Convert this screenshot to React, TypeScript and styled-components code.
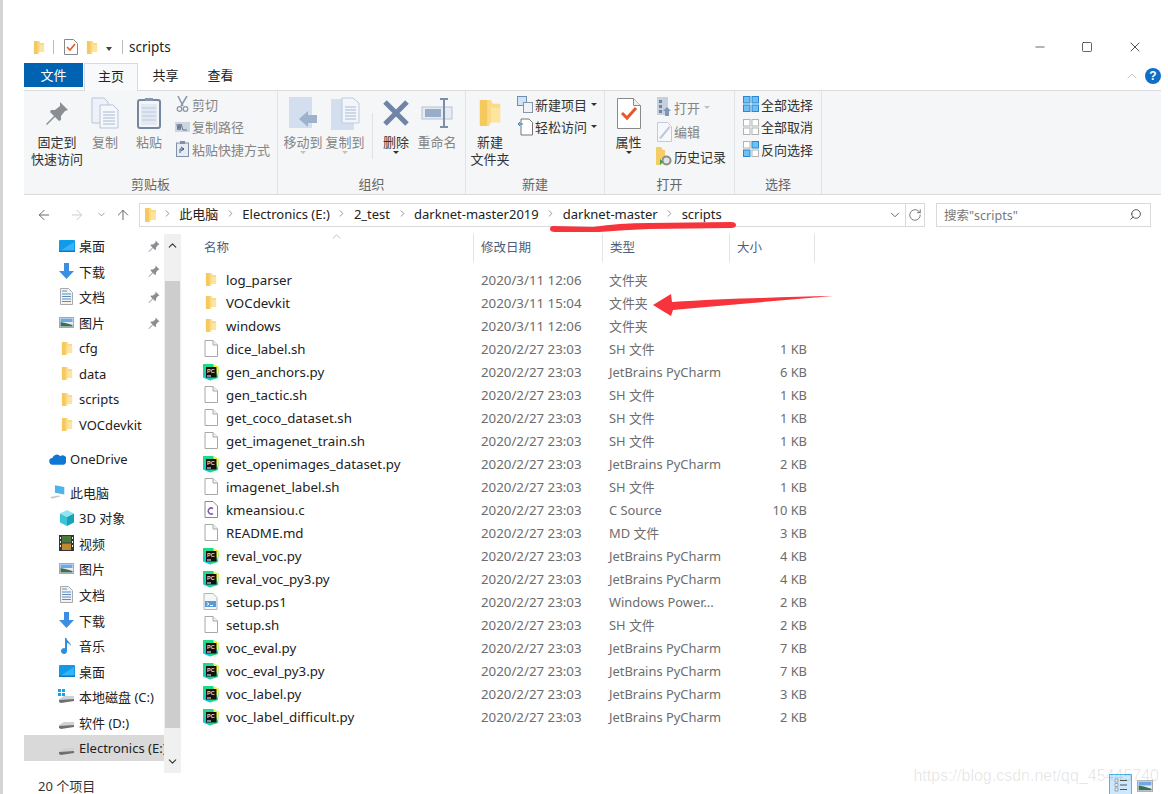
import React from "react";
import styled, { createGlobalStyle } from "styled-components";
import { ChevronDown, ChevronUp, ChevronRight, ArrowLeft, ArrowRight, ArrowUp, RotateCw, Search, Minus, Square, X } from "lucide-react";

const GlobalStyle = createGlobalStyle`
  html, body { margin: 0; padding: 0; background: #fff; }
  body {
    font-family: "Noto Sans", "Noto Sans CJK SC", sans-serif;
    font-size: 14px;
    color: #222;
    overflow: hidden;
  }
`;

// ---- icons ----
const FolderIcon = ({ size = 16 }: { size?: number }) => (
  <svg width={size * 0.8} height={size} viewBox="0 0 13 16">
    <path d="M1 1h6l1 2h4v10H7l-1 2-5 0z" fill="#fbd986" />
    <path d="M1 1h4v14H1z" fill="#f6c95f" />
    <path d="M7 5h5v8H7z" fill="#fde49f" />
  </svg>
);

const FileIcon = () => (
  <svg width="14" height="17" viewBox="0 0 14 17">
    <path d="M1 .5h8l4.5 4.5v11.5H1z" fill="#fff" stroke="#a8a8a8" />
    <path d="M9 .5v4.5h4.5" fill="#f0f0f0" stroke="#a8a8a8" />
  </svg>
);

const PyCharmIcon = () => (
  <svg width="18" height="18" viewBox="0 0 18 18">
    <path d="M1 1h10l6 3-1 11-8 2.5-7-3z" fill="#21d789" />
    <path d="M11 1l6 3-1 9-3-6z" fill="#fcf84a" />
    <path d="M1 9l2 6 6 2.5z" fill="#07c3f2" />
    <rect x="4" y="4" width="10.5" height="10.5" fill="#111" />
    <rect x="5" y="12.5" width="4" height="1" fill="#fff" />
    <text x="5" y="9.5" fontSize="5.5" fontWeight="700" fill="#ddd" fontFamily="Liberation Sans, sans-serif">PC</text>
  </svg>
);

const CSourceIcon = () => (
  <svg width="14" height="17" viewBox="0 0 14 17">
    <path d="M1 .5h8l4.5 4.5v11.5H1z" fill="#fff" stroke="#8a8a8a" />
    <path d="M9 7.5a3 3 0 1 0 0 5" fill="none" stroke="#7b5aa6" strokeWidth="1.5" />
  </svg>
);

const ScriptIcon = () => (
  <svg width="15" height="17" viewBox="0 0 15 17">
    <path d="M1 .5h9l4 4v12H1z" fill="#f4f6f8" stroke="#b4b4b4" />
    <rect x="2" y="8" width="11" height="6" fill="#5b9bd5" />
    <path d="M4 9.5l2 1.5-2 1.5M7 12.5h3" stroke="#fff" fill="none" />
  </svg>
);

const PinIcon = ({ big }: { big?: boolean }) => (
  <svg width={big ? 24 : 12} height={big ? 24 : 12} viewBox="0 0 24 24">
    <path d="M15 1l8 8-3 1-4 5 0 4-2 1-4-4-8 8-1-1 8-8-4-4 1-2 4 0 5-4z" fill="#8a8d92" />
  </svg>
);

const DesktopIcon = () => (
  <svg width="16" height="12" viewBox="0 0 16 12">
    <rect width="16" height="12" rx="1" fill="#0f9bea" />
    <path d="M1 11l14-9v9z" fill="#36b4f5" />
    <rect y="10.5" width="16" height="1.5" fill="#0b78c4" />
  </svg>
);

const DownloadIcon = () => (
  <svg width="15" height="16" viewBox="0 0 15 16">
    <path d="M5 0h5v8h5l-7.5 8L0 8h5z" fill="#3c8fe0" />
  </svg>
);

const DocsIcon = () => (
  <svg width="13" height="17" viewBox="0 0 13 17">
    <path d="M.5.5h8l4 4v12H.5z" fill="#f2f2f2" stroke="#a9a9a9" />
    <path d="M2 3h5M2 6h9M2 8.5h9M2 11h9M2 13.5h9" stroke="#5a8fc0" />
  </svg>
);

const PictureIcon = ({ w = 15, h = 11 }: { w?: number; h?: number }) => (
  <svg width={w} height={h} viewBox="0 0 15 11">
    <rect x=".5" y=".5" width="14" height="10" fill="#e8eef4" stroke="#a9a9a9" />
    <rect x="1.5" y="1.5" width="12" height="3.5" fill="#6ea8e6" />
    <path d="M1.5 9.5V5l5 1 7 2v1.5z" fill="#3e6f55" />
  </svg>
);

const CubeIcon = () => (
  <svg width="16" height="16" viewBox="0 0 16 16">
    <path d="M8 0l7 3.5-7 3.5-7-3.5z" fill="#8fe6ee" />
    <path d="M1 3.5l7 3.5v9l-7-3.5z" fill="#3cc4d6" />
    <path d="M15 3.5L8 7v9l7-3.5z" fill="#17a2b8" />
  </svg>
);

const VideoIcon = () => (
  <svg width="15" height="16" viewBox="0 0 15 16">
    <rect width="15" height="16" fill="#34343c" />
    <rect x="3" y="1" width="9" height="6.5" fill="#4b7a3a" />
    <rect x="3" y="8.5" width="9" height="6.5" fill="#c28a2e" />
    <path d="M1 2h1v2H1zM1 6h1v2H1zM1 10h1v2H1zM13 2h1v2h-1zM13 6h1v2h-1zM13 10h1v2h-1z" fill="#eee" />
  </svg>
);

const MusicIcon = () => (
  <svg width="11" height="16" viewBox="0 0 11 16">
    <path d="M4 0h1.5c0 3 4.5 4 4.5 8-1-2-2.5-3-4-3v8a3 3 0 1 1-2-2.8z" fill="#2b8fe0" />
  </svg>
);

const DriveIcon = ({ win }: { win?: boolean }) => (
  <svg width="17" height="15" viewBox="0 0 17 15">
    {win && <path d="M0 0h3v3H0zM4 0h3v3H4zM0 4h3v3H0zM4 4h3v3H4z" fill="#12a5ef" />}
    <path d="M1 10l5-3h10v3l-13 3-2-1z" fill="#d0d2d4" />
    <path d="M1 11l15-1v2l-13 2-2-1z" fill="#6d6f72" />
  </svg>
);

const CloudIcon = () => (
  <svg width="18" height="12" viewBox="0 0 18 12">
    <path d="M4 12a3.5 3.5 0 0 1-.5-7A5 5 0 0 1 12 3a4 4 0 0 1 6 5v1c0 2-1 3-3 3z" fill="#0f78d4" />
  </svg>
);

const PcIcon = () => (
  <svg width="20" height="16" viewBox="0 0 20 16">
    <path d="M7 0l11 2v9L7 9z" fill="#4fb3ea" />
    <path d="M1 14l10-2 3 1-10 3z" fill="#c8cace" />
  </svg>
);

const CopyBigIcon = () => (
  <svg width="28" height="32" viewBox="0 0 28 32">
    <path d="M1 1h12l4 4v21H1z" fill="#eef2f8" stroke="#b6c5db" />
    <path d="M9 8h13l5 5v18H9z" fill="#f5f7fb" stroke="#b6c5db" />
    <path d="M12 15h12M12 18h12M12 21h12M12 24h12M12 27h12" stroke="#a8bad4" />
  </svg>
);

const PasteBigIcon = () => (
  <svg width="24" height="32" viewBox="0 0 24 32">
    <rect x="1" y="3" width="22" height="28" rx="2" fill="#f3f5f8" stroke="#75869f" strokeWidth="2" />
    <rect x="4" y="7" width="16" height="21" fill="#e3e9f3" />
    <path d="M5 11h14M5 15h14M5 19h14M5 23h14" stroke="#bcc8da" />
    <path d="M8 4h8V1h-8z" fill="#8796ad" />
  </svg>
);

const ScissorsIcon = () => (
  <svg width="13" height="16" viewBox="0 0 13 16">
    <path d="M2 0l5 10M11 0L5 10" stroke="#8a97aa" strokeWidth="1.5" />
    <circle cx="3.5" cy="13" r="2.3" fill="none" stroke="#8a97aa" strokeWidth="1.3" />
    <circle cx="9.5" cy="13" r="2.3" fill="none" stroke="#8a97aa" strokeWidth="1.3" />
  </svg>
);

const CopyPathIcon = () => (
  <svg width="15" height="10" viewBox="0 0 15 10">
    <rect width="15" height="10" fill="#ccd5e3" />
    <path d="M2 2l1 6 1-6 1 6 1-6 2 6h4" fill="none" stroke="#66748a" />
  </svg>
);

const ShortcutIcon = () => (
  <svg width="13" height="16" viewBox="0 0 13 16">
    <rect x=".5" y="2" width="12" height="13.5" fill="#e7ecf4" stroke="#7f90a8" />
    <rect x="4" y="0" width="5" height="3" fill="#7f90a8" />
    <path d="M4 12V8h4M5 6l3 2-3 2" fill="none" stroke="#41587a" />
  </svg>
);

const MoveToIcon = () => (
  <svg width="28" height="32" viewBox="0 0 28 32">
    <rect width="23" height="31" fill="#d3deee" />
    <path d="M10 22l9-8v4h9v8h-9v4z" fill="#9eb2cd" />
  </svg>
);

const CopyToIcon = () => (
  <svg width="29" height="33" viewBox="0 0 29 33">
    <rect y="2" width="23" height="31" fill="#d3deee" />
    <path d="M11 1h11l6 5v20H11z" fill="#f2f5fa" stroke="#bccbdf" />
    <path d="M14 10h11M14 13h11M14 16h11M14 19h11M14 22h11" stroke="#a8bad4" />
  </svg>
);

const DeleteIcon = () => (
  <svg width="28" height="28" viewBox="0 0 28 28">
    <path d="M3 3l22 22M25 3L3 25" stroke="#6f84a8" strokeWidth="5" />
  </svg>
);

const RenameIcon = () => (
  <svg width="32" height="30" viewBox="0 0 32 30">
    <rect x="1" y="9" width="30" height="12" fill="#e6ebf3" stroke="#b4c2d6" />
    <rect x="4" y="11" width="16" height="8" fill="#99adca" />
    <path d="M19 1h8M19 29h8M23 1v28" stroke="#7d8fa8" strokeWidth="2" />
  </svg>
);

const NewItemIcon = () => (
  <svg width="16" height="17" viewBox="0 0 16 17">
    <rect x=".5" y=".5" width="9" height="9" fill="#cfe3f5" stroke="#6d8fb3" />
    <rect x="6.5" y="6.5" width="9" height="10" fill="#eef1f6" stroke="#8795a8" />
  </svg>
);

const EasyAccessIcon = () => (
  <svg width="15" height="18" viewBox="0 0 15 18">
    <path d="M3 1h8l3.5 3.5V17H3z" fill="#fff" stroke="#777" />
    <path d="M0 6h5M2 4L0 6l2 2" fill="none" stroke="#2d7fc4" />
  </svg>
);

const PropertiesIcon = () => (
  <svg width="24" height="31" viewBox="0 0 24 31">
    <path d="M.5.5h16l7 7v23H.5z" fill="#fff" stroke="#8a8a8a" />
    <path d="M16.5.5v7h7" fill="#eee" stroke="#8a8a8a" />
    <path d="M5 15l5 5 9-10" fill="none" stroke="#e8562a" strokeWidth="3" />
  </svg>
);

const OpenIcon = () => (
  <svg width="15" height="20" viewBox="0 0 15 20">
    <rect width="11" height="18" fill="#c7d1de" />
    <path d="M2 3h3v3H2zM2 8h3v3H2zM2 13h3v3H2z" fill="#6f84a0" />
    <path d="M10 10l4 4h-2v5H8v-5H6z" fill="#7e97b8" />
  </svg>
);

const EditIcon = () => (
  <svg width="15" height="20" viewBox="0 0 15 20">
    <path d="M.5.5h10l4 4v15H.5z" fill="#f6f8fb" stroke="#c0cada" />
    <path d="M2 16L12 4l1.5 1.5L4 17z" fill="#bccbdc" />
  </svg>
);

const HistoryIcon = () => (
  <svg width="16" height="19" viewBox="0 0 16 19">
    <path d="M0 0h5l2 3h2v9H5v6H0z" fill="#f6cc66" />
    <circle cx="10.5" cy="13.5" r="5" fill="#8c8c8c" />
    <circle cx="10.5" cy="13.5" r="3" fill="#e4e4e4" />
    <path d="M4 12l3 3-3 3z" fill="#37a63c" />
  </svg>
);

const SelectGridIcon = ({ on }: { on: boolean[] }) => (
  <svg width="16" height="16" viewBox="0 0 16 16">
    {[[0, 0], [8.5, 0], [0, 8.5], [8.5, 8.5]].map(([x, y], i) => (
      <rect
        key={i}
        x={x + 0.5}
        y={y + 0.5}
        width="6.5"
        height="6.5"
        fill={on[i] ? "#6cc0f5" : "#fff"}
        stroke={on[i] ? "#2b88cf" : "#b3b3b3"}
      />
    ))}
  </svg>
);

const DetailViewIcon = () => (
  <svg width="16" height="16" viewBox="0 0 16 16">
    <path d="M2 2h3v3H2zM2 6.5h3v3H2zM2 11h3v3H2z" fill="#eee" stroke="#777" strokeWidth=".6" />
    <path d="M7 3.5h7M7 8h7M7 12.5h7" stroke="#555" />
  </svg>
);

// ---- data ----
type FileKind = "folder" | "sh" | "py" | "c" | "ps";

const files: { name: string; date: string; type: string; size: string; kind: FileKind }[] = [
  { name: "log_parser", date: "2020/3/11 12:06", type: "文件夹", size: "", kind: "folder" },
  { name: "VOCdevkit", date: "2020/3/11 15:04", type: "文件夹", size: "", kind: "folder" },
  { name: "windows", date: "2020/3/11 12:06", type: "文件夹", size: "", kind: "folder" },
  { name: "dice_label.sh", date: "2020/2/27 23:03", type: "SH 文件", size: "1 KB", kind: "sh" },
  { name: "gen_anchors.py", date: "2020/2/27 23:03", type: "JetBrains PyCharm", size: "6 KB", kind: "py" },
  { name: "gen_tactic.sh", date: "2020/2/27 23:03", type: "SH 文件", size: "1 KB", kind: "sh" },
  { name: "get_coco_dataset.sh", date: "2020/2/27 23:03", type: "SH 文件", size: "1 KB", kind: "sh" },
  { name: "get_imagenet_train.sh", date: "2020/2/27 23:03", type: "SH 文件", size: "1 KB", kind: "sh" },
  { name: "get_openimages_dataset.py", date: "2020/2/27 23:03", type: "JetBrains PyCharm", size: "2 KB", kind: "py" },
  { name: "imagenet_label.sh", date: "2020/2/27 23:03", type: "SH 文件", size: "1 KB", kind: "sh" },
  { name: "kmeansiou.c", date: "2020/2/27 23:03", type: "C Source", size: "10 KB", kind: "c" },
  { name: "README.md", date: "2020/2/27 23:03", type: "MD 文件", size: "3 KB", kind: "sh" },
  { name: "reval_voc.py", date: "2020/2/27 23:03", type: "JetBrains PyCharm", size: "4 KB", kind: "py" },
  { name: "reval_voc_py3.py", date: "2020/2/27 23:03", type: "JetBrains PyCharm", size: "4 KB", kind: "py" },
  { name: "setup.ps1", date: "2020/2/27 23:03", type: "Windows Power...", size: "2 KB", kind: "ps" },
  { name: "setup.sh", date: "2020/2/27 23:03", type: "SH 文件", size: "2 KB", kind: "sh" },
  { name: "voc_eval.py", date: "2020/2/27 23:03", type: "JetBrains PyCharm", size: "7 KB", kind: "py" },
  { name: "voc_eval_py3.py", date: "2020/2/27 23:03", type: "JetBrains PyCharm", size: "7 KB", kind: "py" },
  { name: "voc_label.py", date: "2020/2/27 23:03", type: "JetBrains PyCharm", size: "3 KB", kind: "py" },
  { name: "voc_label_difficult.py", date: "2020/2/27 23:03", type: "JetBrains PyCharm", size: "2 KB", kind: "py" },
];

const kindIcon = (kind: FileKind) => {
  if (kind === "folder") return <FolderIcon size={15} />;
  if (kind === "py") return <PyCharmIcon />;
  if (kind === "c") return <CSourceIcon />;
  if (kind === "ps") return <ScriptIcon />;
  return <FileIcon />;
};

const quick: { label: string; icon: React.ReactNode; pinned?: boolean }[] = [
  { label: "桌面", icon: <DesktopIcon />, pinned: true },
  { label: "下载", icon: <DownloadIcon />, pinned: true },
  { label: "文档", icon: <DocsIcon />, pinned: true },
  { label: "图片", icon: <PictureIcon />, pinned: true },
  { label: "cfg", icon: <FolderIcon size={15} /> },
  { label: "data", icon: <FolderIcon size={15} /> },
  { label: "scripts", icon: <FolderIcon size={15} /> },
  { label: "VOCdevkit", icon: <FolderIcon size={15} /> },
];

const pcItems: { label: string; icon: React.ReactNode; active?: boolean }[] = [
  { label: "3D 对象", icon: <CubeIcon /> },
  { label: "视频", icon: <VideoIcon /> },
  { label: "图片", icon: <PictureIcon /> },
  { label: "文档", icon: <DocsIcon /> },
  { label: "下载", icon: <DownloadIcon /> },
  { label: "音乐", icon: <MusicIcon /> },
  { label: "桌面", icon: <DesktopIcon /> },
  { label: "本地磁盘 (C:)", icon: <DriveIcon win /> },
  { label: "软件 (D:)", icon: <DriveIcon /> },
  { label: "Electronics (E:)", icon: <DriveIcon />, active: true },
];

const crumbs = ["此电脑", "Electronics (E:)", "2_test", "darknet-master2019", "darknet-master", "scripts"];

// ---- component ----
const App = () => (
  <>
    <GlobalStyle />
    <Page>
      <Frame>
        <TitleBar>
          <FolderIcon size={15} />
          <TitleSep />
          <PropsQuick>
            <svg width="14" height="16" viewBox="0 0 14 16">
              <path d="M.5.5h9l4 4v11H.5z" fill="#fff" stroke="#888" />
              <path d="M3 8l3 3 5-6" fill="none" stroke="#e8562a" strokeWidth="1.6" />
            </svg>
          </PropsQuick>
          <FolderIcon size={15} />
          <QuickCaret />
          <TitleSep />
          <TitleText>scripts</TitleText>
          <WindowControls>
            <Minus size={14} strokeWidth={1.2} />
            <Square size={12} strokeWidth={1.4} />
            <X size={16} strokeWidth={1.2} />
          </WindowControls>
        </TitleBar>

        <TabRow>
          <FileTab>文件</FileTab>
          <HomeTab>主页</HomeTab>
          <Tab>共享</Tab>
          <Tab>查看</Tab>
          <TabEnd>
            <ChevronUp size={16} strokeWidth={1} color="#aaa" />
            <HelpDot>?</HelpDot>
          </TabEnd>
        </TabRow>

        <Ribbon>
          <RibbonGroup $width={254}>
            <GroupBody>
              <BigButton $width={66}>
                <IconSlot><PinIcon big /></IconSlot>
                <BigLabel>固定到<br />快速访问</BigLabel>
              </BigButton>
              <BigButton $width={30} $muted>
                <IconSlot><CopyBigIcon /></IconSlot>
                <BigLabel>复制</BigLabel>
              </BigButton>
              <BigButton $width={42} $left={8} $muted>
                <IconSlot><PasteBigIcon /></IconSlot>
                <BigLabel>粘贴</BigLabel>
              </BigButton>
              <SmallStack>
                <SmallItem $muted><SmallIcon><ScissorsIcon /></SmallIcon>剪切</SmallItem>
                <SmallItem $muted><SmallIcon><CopyPathIcon /></SmallIcon>复制路径</SmallItem>
                <SmallItem $muted><SmallIcon><ShortcutIcon /></SmallIcon>粘贴快捷方式</SmallItem>
              </SmallStack>
            </GroupBody>
            <GroupLabel>剪贴板</GroupLabel>
          </RibbonGroup>

          <RibbonGroup $width={188}>
            <GroupBody>
              <BigButton $width={44} $left={3} $muted>
                <IconSlot><MoveToIcon /></IconSlot>
                <BigLabel>移动到</BigLabel>
                <Caret $light />
              </BigButton>
              <BigButton $width={40} $muted>
                <IconSlot><CopyToIcon /></IconSlot>
                <BigLabel>复制到</BigLabel>
                <Caret $light />
              </BigButton>
              <GroupDivider />
              <BigButton $width={42} $left={2}>
                <IconSlot><DeleteIcon /></IconSlot>
                <BigLabel>删除</BigLabel>
                <Caret />
              </BigButton>
              <BigButton $width={40} $muted>
                <IconSlot><RenameIcon /></IconSlot>
                <BigLabel>重命名</BigLabel>
              </BigButton>
            </GroupBody>
            <GroupLabel>组织</GroupLabel>
          </RibbonGroup>

          <RibbonGroup $width={139}>
            <GroupBody>
              <BigButton $width={46} $left={1}>
                <IconSlot><FolderIcon size={30} /></IconSlot>
                <BigLabel>新建<br />文件夹</BigLabel>
              </BigButton>
              <SmallStack>
                <SmallItem><SmallIcon><NewItemIcon /></SmallIcon>新建项目<InlineCaret /></SmallItem>
                <SmallItem><SmallIcon><EasyAccessIcon /></SmallIcon>轻松访问<InlineCaret /></SmallItem>
              </SmallStack>
            </GroupBody>
            <GroupLabel>新建</GroupLabel>
          </RibbonGroup>

          <RibbonGroup $width={130}>
            <GroupBody>
              <BigButton $width={47}>
                <IconSlot><PropertiesIcon /></IconSlot>
                <BigLabel>属性</BigLabel>
                <Caret />
              </BigButton>
              <OpenStack>
                <SmallItem $muted><SmallIcon><OpenIcon /></SmallIcon>打开<InlineCaret $light /></SmallItem>
                <SmallItem $muted><SmallIcon><EditIcon /></SmallIcon>编辑</SmallItem>
                <SmallItem><SmallIcon><HistoryIcon /></SmallIcon>历史记录</SmallItem>
              </OpenStack>
            </GroupBody>
            <GroupLabel>打开</GroupLabel>
          </RibbonGroup>

          <RibbonGroup $width={87}>
            <GroupBody>
              <SelectStack>
                <SmallItem><SmallIcon><SelectGridIcon on={[true, true, true, true]} /></SmallIcon>全部选择</SmallItem>
                <SmallItem><SmallIcon><SelectGridIcon on={[false, false, false, false]} /></SmallIcon>全部取消</SmallItem>
                <SmallItem><SmallIcon><SelectGridIcon on={[false, true, true, false]} /></SmallIcon>反向选择</SmallItem>
              </SelectStack>
            </GroupBody>
            <GroupLabel>选择</GroupLabel>
          </RibbonGroup>
        </Ribbon>

        <AddressRow>
          <NavButtons>
            <ArrowLeft size={16} strokeWidth={1.3} color="#555" />
            <ArrowRight size={16} strokeWidth={1.3} color="#c4c4c4" />
            <NavDrop><ChevronDown size={11} strokeWidth={1.5} color="#777" /></NavDrop>
            <ArrowUp size={16} strokeWidth={1.3} color="#555" />
          </NavButtons>
          <AddressBox>
            <FolderIcon size={16} />
            <CrumbList>
              {crumbs.map((c) => (
                <React.Fragment key={c}>
                  <ChevronRight size={11} strokeWidth={1.5} color="#666" />
                  <Crumb>{c}</Crumb>
                </React.Fragment>
              ))}
            </CrumbList>
            <AddressTools>
              <ChevronDown size={14} strokeWidth={1.5} color="#555" />
              <RefreshCell><RotateCw size={14} strokeWidth={1.3} color="#555" /></RefreshCell>
            </AddressTools>
            <Underline viewBox="0 0 188 13" preserveAspectRatio="none">
              <path d="M1 9Q1 6 4 6L44 7Q70 3 100 3L182 2Q187 2 187 5Q187 8 182 8L100 9Q75 10 50 12L6 12Q1 12 1 9z" fill="#f7333b" />
            </Underline>
          </AddressBox>
          <SearchBox>
            <span>搜索"scripts"</span>
            <SearchGlass><Search size={13} strokeWidth={1.8} color="#555" /></SearchGlass>
          </SearchBox>
        </AddressRow>

        <Body>
          <NavPane>
            <NavList>
              {quick.map((item) => (
                <NavRow key={item.label}>
                  <NavIcon>{item.icon}</NavIcon>
                  <NavText>{item.label}</NavText>
                  {item.pinned && <NavPin><PinIcon /></NavPin>}
                </NavRow>
              ))}
              <NavGap />
              <NavRow $root>
                <NavIcon><CloudIcon /></NavIcon>
                <NavText>OneDrive</NavText>
              </NavRow>
              <NavGap />
              <NavRow $root>
                <NavIcon><PcIcon /></NavIcon>
                <NavText>此电脑</NavText>
              </NavRow>
              {pcItems.map((item) => (
                <NavRow key={item.label} $active={item.active}>
                  <NavIcon>{item.icon}</NavIcon>
                  <NavText>{item.label}</NavText>
                </NavRow>
              ))}
            </NavList>
            <ScrollBar>
              <ScrollEnd><ChevronUp size={13} strokeWidth={2} color="#333" /></ScrollEnd>
              <ScrollThumb />
              <ScrollEnd $down><ChevronDown size={13} strokeWidth={2} color="#333" /></ScrollEnd>
            </ScrollBar>
          </NavPane>

          <ListPane>
            <HeaderRow>
              <HeaderCell $width={277}>
                名称
                <SortCaret><ChevronUp size={13} strokeWidth={1} color="#888" /></SortCaret>
              </HeaderCell>
              <HeaderCell $width={129}>修改日期</HeaderCell>
              <HeaderCell $width={127}>类型</HeaderCell>
              <HeaderCell $width={85}>大小</HeaderCell>
            </HeaderRow>
            <FileList>
              {files.map((f) => (
                <FileRow key={f.name}>
                  <FileIconCell>{kindIcon(f.kind)}</FileIconCell>
                  <FileName>{f.name}</FileName>
                  <FileDate>{f.date}</FileDate>
                  <FileMeta>{f.type}</FileMeta>
                  <FileSize>{f.size}</FileSize>
                </FileRow>
              ))}
            </FileList>
            <Arrow viewBox="0 0 180 22">
              <path d="M0 11L18 0l1 8c50-3 110-5 161-6-55 5-110 9-160 14l-2 6z" fill="#f7333b" />
            </Arrow>
          </ListPane>
        </Body>

        <StatusBar>
          <StatusText>20 个项目</StatusText>
          <ViewToggles>
            <ViewActive><DetailViewIcon /></ViewActive>
            <PictureIcon w={16} h={12} />
          </ViewToggles>
        </StatusBar>
      </Frame>
      <Watermark>https://blog.csdn.net/qq_45445740</Watermark>
    </Page>
  </>
);

export default App;

// ---- styles ----
const Page = styled.div`
  position: relative;
  width: 1168px;
  height: 794px;
  box-sizing: border-box;
  padding: 0 7px 0 21px;
  border-left: 3px solid #d4d4d4;
  background: #fff;
  overflow: hidden;
`;

const Frame = styled.div`
  display: flex;
  flex-direction: column;
  height: 794px;
`;

const TitleBar = styled.div`
  display: flex;
  align-items: center;
  gap: 8px;
  height: 20px;
  margin-top: 37px;
  padding-left: 9px;
  margin-bottom: 6px;
`;

const TitleSep = styled.span`
  width: 1px;
  height: 14px;
  background: #bbb;
`;

const PropsQuick = styled.span`
  display: flex;
  margin-left: 2px;
`;

const QuickCaret = styled.span`
  width: 0;
  height: 0;
  margin: 3px 2px 0 0;
  border-left: 3px solid transparent;
  border-right: 3px solid transparent;
  border-top: 4px solid #444;
`;

const TitleText = styled.span`
  margin-left: -2px;
  font-size: 13.5px;
  color: #222;
`;

const WindowControls = styled.div`
  display: flex;
  align-items: center;
  gap: 34px;
  margin-left: auto;
  padding-right: 18px;
  color: #222;
`;

const TabRow = styled.div`
  display: flex;
  height: 27px;
  align-items: flex-start;
`;

const FileTab = styled.div`
  width: 59px;
  height: 24px;
  line-height: 24px;
  text-align: center;
  background: #0063b1;
  color: #fff;
  font-size: 13px;
`;

const HomeTab = styled.div`
  position: relative;
  z-index: 1;
  width: 54px;
  height: 28px;
  line-height: 25px;
  margin-left: 1px;
  box-sizing: border-box;
  text-align: center;
  background: #f8f9fa;
  border: 1px solid #dadbdc;
  border-bottom: none;
  font-size: 13px;
`;

const Tab = styled.div`
  width: 55px;
  height: 27px;
  line-height: 25px;
  text-align: center;
  font-size: 13px;
`;

const TabEnd = styled.div`
  display: flex;
  align-items: center;
  gap: 5px;
  margin-left: auto;
  height: 26px;
`;

const HelpDot = styled.span`
  width: 16px;
  height: 16px;
  border-radius: 50%;
  background: #0f6fc6;
  color: #fff;
  font: bold 12px/16px "Liberation Sans", sans-serif;
  text-align: center;
`;

const Ribbon = styled.div`
  display: flex;
  height: 105px;
  background: #f5f6f7;
  border-top: 1px solid #dadbdc;
  border-bottom: 1px solid #dadbdc;
  box-sizing: border-box;
`;

const RibbonGroup = styled.div<{ $width: number }>`
  display: flex;
  flex-direction: column;
  width: ${(p) => p.$width}px;
  box-sizing: border-box;
  border-right: 1px solid #e2e3e4;
`;

const GroupBody = styled.div`
  display: flex;
  flex: 1;
  padding-top: 2px;
`;

const GroupDivider = styled.span`
  width: 1px;
  height: 46px;
  margin: 20px 0 0 7px;
  background: #dfe0e1;
`;

const GroupLabel = styled.div`
  height: 20px;
  line-height: 20px;
  text-align: center;
  font-size: 13px;
  color: #666;
`;

const BigButton = styled.div<{ $width: number; $left?: number; $muted?: boolean }>`
  display: flex;
  flex-direction: column;
  align-items: center;
  width: ${(p) => p.$width}px;
  margin-left: ${(p) => p.$left ?? 0}px;
  flex-shrink: 0;
  color: ${(p) => (p.$muted ? "#858585" : "#333")};
`;

const IconSlot = styled.div`
  display: flex;
  align-items: center;
  justify-content: center;
  height: 40px;
  margin-bottom: 1px;
`;

const BigLabel = styled.div`
  font-size: 13px;
  line-height: 17px;
  text-align: center;
  white-space: nowrap;
`;

const Caret = styled.span<{ $light?: boolean }>`
  width: 0;
  height: 0;
  border-left: 3px solid transparent;
  border-right: 3px solid transparent;
  border-top: 3px solid ${(p) => (p.$light ? "#c0c0c0" : "#333")};
`;

const InlineCaret = styled(Caret)`
  margin-left: 4px;
`;

const SmallStack = styled.div`
  display: flex;
  flex-direction: column;
  padding-left: 4px;
`;

const OpenStack = styled(SmallStack)`
  padding-top: 3px;
  gap: 2px;
`;

const SelectStack = styled(SmallStack)`
  padding-left: 8px;
`;

const SmallItem = styled.div<{ $muted?: boolean }>`
  display: flex;
  align-items: center;
  height: 22.5px;
  font-size: 13px;
  white-space: nowrap;
  color: ${(p) => (p.$muted ? "#858585" : "#333")};
`;

const SmallIcon = styled.span`
  display: flex;
  align-items: center;
  justify-content: center;
  width: 16px;
  margin-right: 2px;
`;

const AddressRow = styled.div`
  display: flex;
  align-items: center;
  height: 39px;
  flex-shrink: 0;
`;

const NavButtons = styled.div`
  display: flex;
  align-items: center;
  width: 115px;
  flex-shrink: 0;
  box-sizing: border-box;
  padding-left: 12px;
  gap: 17px;
`;

const NavDrop = styled.span`
  display: flex;
  margin: 0 -9px 0 -6px;
`;

const AddressBox = styled.div`
  position: relative;
  display: flex;
  align-items: center;
  width: 786px;
  flex-shrink: 0;
  height: 24px;
  box-sizing: border-box;
  padding-left: 4px;
  border: 1px solid #d9d9d9;
`;

const CrumbList = styled.div`
  display: flex;
  align-items: center;
  gap: 6.5px;
  margin-left: 5px;
  padding-bottom: 2px;
  flex: 1;
`;

const Crumb = styled.span`
  font-size: 13px;
  white-space: nowrap;
  color: #222;
`;

const AddressTools = styled.div`
  display: flex;
  align-items: center;
  height: 100%;
  gap: 3px;
`;

const RefreshCell = styled.span`
  display: flex;
  align-items: center;
  justify-content: center;
  width: 18px;
  height: 100%;
  border-left: 1px solid #d9d9d9;
`;

const Underline = styled.svg`
  position: absolute;
  left: 409px;
  top: 16px;
  width: 188px;
  height: 13px;
`;

const SearchBox = styled.div`
  display: flex;
  align-items: center;
  justify-content: space-between;
  width: 215px;
  height: 24px;
  margin-left: 11px;
  box-sizing: border-box;
  padding: 0 8px 0 7px;
  border: 1px solid #d9d9d9;
  font-size: 12.5px;
  color: #777;
`;

const SearchGlass = styled.span`
  display: flex;
  transform: scaleX(-1);
`;

const Body = styled.div`
  display: flex;
  flex: 1;
  min-height: 0;
`;

const NavPane = styled.div`
  display: flex;
  width: 171px;
  flex-shrink: 0;
`;

const NavList = styled.div`
  width: 140px;
  margin-top: -1px;
  overflow: hidden;
`;

const NavRow = styled.div<{ $root?: boolean; $active?: boolean }>`
  display: flex;
  align-items: center;
  height: 25.6px;
  padding-left: ${(p) => (p.$root ? "25px" : "34px")};
  background: ${(p) => (p.$active ? "#d9d9d9" : "transparent")};
  white-space: nowrap;
`;

const NavIcon = styled.span`
  display: flex;
  justify-content: center;
  width: 17px;
  margin-right: 4px;
  flex-shrink: 0;
`;

const NavText = styled.span`
  font-size: 13px;
  color: #222;
`;

const NavPin = styled.span`
  display: flex;
  margin-left: auto;
  padding-right: 4px;
`;

const NavGap = styled.div`
  height: 8px;
`;

const ScrollBar = styled.div`
  display: flex;
  flex-direction: column;
  width: 17px;
  height: 539px;
  background: #f0f0f0;
`;

const ScrollEnd = styled.div<{ $down?: boolean }>`
  display: flex;
  align-items: ${(p) => (p.$down ? "flex-end" : "flex-start")};
  justify-content: center;
  height: ${(p) => (p.$down ? "45px" : "47px")};
  padding: 5px 0;
  box-sizing: border-box;
`;

const ScrollThumb = styled.div`
  flex: 1;
  margin: 0 1px;
  background: #cdcdcd;
`;

const ListPane = styled.div`
  position: relative;
  flex: 1;
  padding-left: 2px;
`;

const HeaderRow = styled.div`
  display: flex;
  height: 28px;
`;

const HeaderCell = styled.div<{ $width: number }>`
  position: relative;
  width: ${(p) => p.$width}px;
  box-sizing: border-box;
  padding: 3px 0 0 7px;
  border-right: 1px solid #e5e5e5;
  font-size: 12.5px;
  color: #4c607a;
`;

const SortCaret = styled.span`
  position: absolute;
  left: 133px;
  top: -4px;
`;

const FileList = styled.div`
  padding-top: 6px;
`;

const FileRow = styled.div`
  display: grid;
  grid-template-columns: 29px 248px 128px 127px 78px;
  align-items: center;
  height: 23px;
`;

const FileIconCell = styled.span`
  display: flex;
  justify-content: center;
  padding-right: 2px;
`;

const FileName = styled.span`
  font-size: 13.3px;
  color: #222;
  white-space: nowrap;
`;

const FileMeta = styled.span`
  padding-left: 7px;
  font-size: 12.9px;
  color: #6d6d6d;
  white-space: nowrap;
`;

const FileDate = styled(FileMeta)`
  font-size: 13.3px;
`;

const FileSize = styled(FileMeta)`
  text-align: right;
`;

const Arrow = styled.svg`
  position: absolute;
  left: 458px;
  top: 60px;
  width: 180px;
  height: 22px;
`;

const StatusBar = styled.div`
  display: flex;
  align-items: flex-start;
  justify-content: space-between;
  height: 16px;
  flex-shrink: 0;
  padding: 0 8px 0 14px;
`;

const StatusText = styled.span`
  font-size: 13px;
  line-height: 17px;
  color: #333;
`;

const ViewToggles = styled.div`
  display: flex;
  align-items: flex-start;
  gap: 5px;
`;

const ViewActive = styled.span`
  display: flex;
  align-items: center;
  justify-content: center;
  width: 23px;
  height: 20px;
  margin-top: -4px;
  box-sizing: border-box;
  background: #cce8ff;
  border: 1px solid #4db6ee;
  border-bottom: none;
  & + svg { margin-top: 2px; }
`;

const Watermark = styled.div`
  position: absolute;
  right: 9px;
  bottom: 9px;
  font: 16px "Liberation Sans", sans-serif;
  color: rgba(0, 0, 0, 0.1);
  white-space: nowrap;
`;
